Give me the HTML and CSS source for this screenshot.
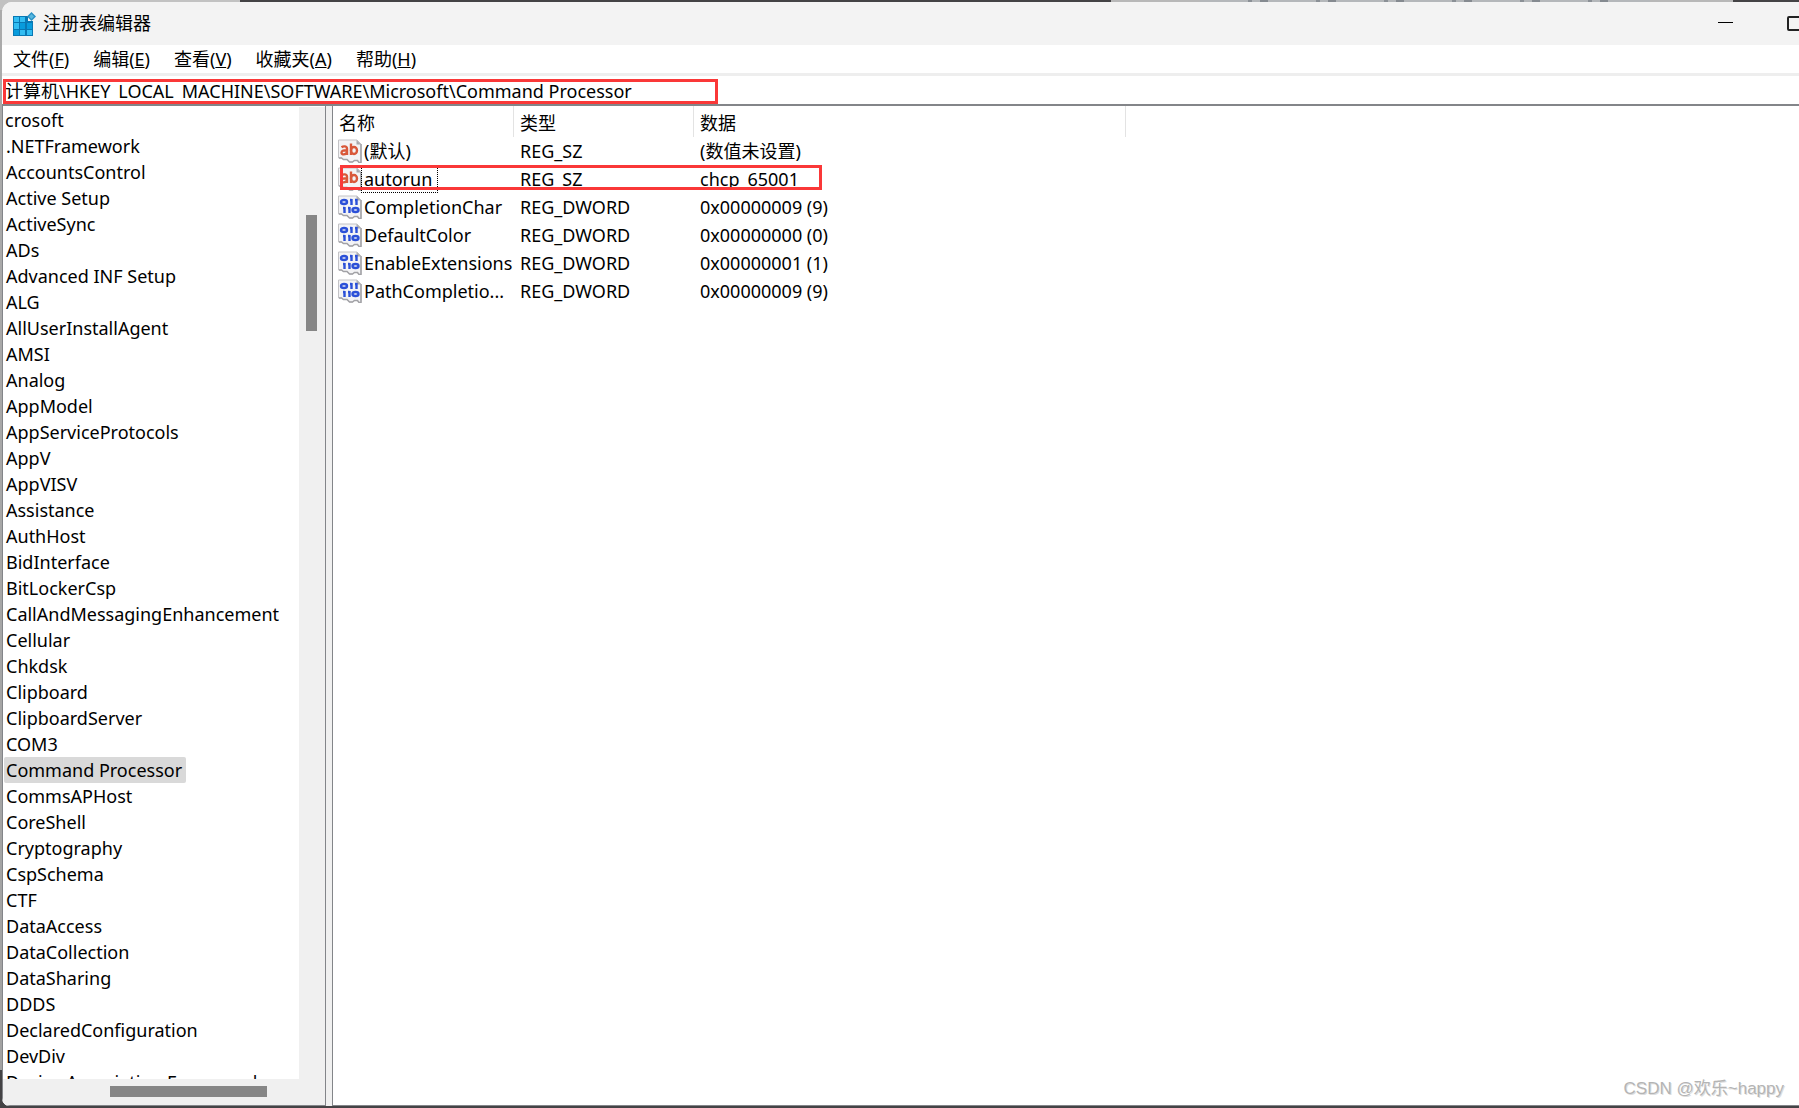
FILE: index.html
```html
<!DOCTYPE html>
<html lang="zh-CN">
<head>
<meta charset="utf-8">
<title>注册表编辑器</title>
<link rel="stylesheet" href="styles.css">
</head>
<body>
<svg class="defs" aria-hidden="true">
  <symbol id="page" viewBox="0 0 24 24">
    <path d="M.5 1H19l4 4v18.500h-2l-1.500-2h-3l-2 1.500h-3L9 20.500H5.500L3.500 19H.5z" fill="#f3f3f5" stroke="#c3c3c6"/>
    <path d="M23 5v18.500h-2l-1.500-2h-3l-2 1.500h-3L9 20.500H5.500L3.500 19H1" fill="none" stroke="#a2a2a6" stroke-width="1.500"/>
    <path d="M18.500 1v4.500H23z" fill="#a9a9ad"/>
  </symbol>
  <symbol id="string" viewBox="0 0 24 24">
    <use href="#page"/>
    <g fill="none" stroke="#d9583a" stroke-width="2.400">
      <path d="M3.500 8.200c2-1.400 5.500-1.200 5.500 1.500V16M9 11.300c-3-.1-5.500.4-5.500 2.400 0 2.300 4.300 2.200 5.500-.5"/>
      <path d="M13 4.500V16"/><ellipse cx="16" cy="11.500" rx="3" ry="3.500"/>
    </g>
  </symbol>
  <symbol id="binary" viewBox="0 0 24 24">
    <use href="#page"/>
    <g fill="none" stroke="#2b50d8" stroke-width="2.400">
      <ellipse cx="6" cy="7" rx="3" ry="2"/><path d="M13.500 4V10M18.500 4V10M12 5h1.500M17 5h1.500"/>
      <path d="M6.500 12v6M11.500 12v6M5 13h1.500M10 13h1.500"/><ellipse cx="17.500" cy="15" rx="3" ry="2"/>
    </g>
  </symbol>
</svg>
<div class="window">
  <header class="titlebar">
    <svg class="app-icon" viewBox="0 0 24 24" aria-hidden="true">
      <path d="M1 4h15v5h5v15H1z" fill="#0878b4"/>
      <g fill="#32bdf2"><path d="M2 5h5v5H2zM8 5h5v5H8zM2 11h5v6H2zM8 18h5v5H8zM15 18h5v5h-5z"/></g>
      <g fill="#079bdc"><path d="M8 11h5v6H8zM15 11h5v6h-5zM2 18h5v5H2z"/></g>
      <path d="M19.500 0 24 4.500 19.500 9 15 4.500z" fill="#2a90c4"/><path d="M19.500 2 22 4.500 19.500 7 17 4.500z" fill="#58b8e0"/>
    </svg>
    <h1 class="title">注册表编辑器</h1>
    <div class="controls">
      <button class="control" aria-label="最小化"><span class="minimize"></span></button>
      <button class="control" aria-label="最大化"><span class="maximize"></span></button>
    </div>
  </header>
  <nav class="menu">
    <button>文件(<u>F</u>)</button>
    <button>编辑(<u>E</u>)</button>
    <button>查看(<u>V</u>)</button>
    <button>收藏夹(<u>A</u>)</button>
    <button>帮助(<u>H</u>)</button>
  </nav>
  <div class="address">
    <input type="text" aria-label="地址" value="计算机\HKEY_LOCAL_MACHINE\SOFTWARE\Microsoft\Command Processor">
    <span class="mark mark-address"></span>
  </div>
  <main class="panes">
    <section class="tree-pane">
      <ul class="tree" role="tree">
        <li class="parent" role="treeitem">crosoft</li>
        <li role="treeitem">.NETFramework</li>
        <li role="treeitem">AccountsControl</li>
        <li role="treeitem">Active Setup</li>
        <li role="treeitem">ActiveSync</li>
        <li role="treeitem">ADs</li>
        <li role="treeitem">Advanced INF Setup</li>
        <li role="treeitem">ALG</li>
        <li role="treeitem">AllUserInstallAgent</li>
        <li role="treeitem">AMSI</li>
        <li role="treeitem">Analog</li>
        <li role="treeitem">AppModel</li>
        <li role="treeitem">AppServiceProtocols</li>
        <li role="treeitem">AppV</li>
        <li role="treeitem">AppVISV</li>
        <li role="treeitem">Assistance</li>
        <li role="treeitem">AuthHost</li>
        <li role="treeitem">BidInterface</li>
        <li role="treeitem">BitLockerCsp</li>
        <li role="treeitem">CallAndMessagingEnhancement</li>
        <li role="treeitem">Cellular</li>
        <li role="treeitem">Chkdsk</li>
        <li role="treeitem">Clipboard</li>
        <li role="treeitem">ClipboardServer</li>
        <li role="treeitem">COM3</li>
        <li class="selected" role="treeitem" aria-selected="true">Command Processor</li>
        <li role="treeitem">CommsAPHost</li>
        <li role="treeitem">CoreShell</li>
        <li role="treeitem">Cryptography</li>
        <li role="treeitem">CspSchema</li>
        <li role="treeitem">CTF</li>
        <li role="treeitem">DataAccess</li>
        <li role="treeitem">DataCollection</li>
        <li role="treeitem">DataSharing</li>
        <li role="treeitem">DDDS</li>
        <li role="treeitem">DeclaredConfiguration</li>
        <li role="treeitem">DevDiv</li>
        <li role="treeitem">Device Association Framework</li>
      </ul>
      <div class="scroll-y"><div class="thumb-y"></div></div>
      <div class="scroll-x"><div class="thumb-x"></div></div>
    </section>
    <section class="values-pane">
      <table class="values">
        <colgroup><col class="col-name"><col class="col-type"><col class="col-data"></colgroup>
        <thead><tr><th>名称</th><th>类型</th><th>数据</th></tr></thead>
        <tbody>
          <tr><td><div class="name"><svg><use href="#string"/></svg><span>(默认)</span></div></td><td>REG_SZ</td><td>(数值未设置)</td></tr>
          <tr><td><div class="name"><svg><use href="#string"/></svg><span class="focused">autorun</span></div></td><td>REG_SZ</td><td>chcp_65001</td></tr>
          <tr><td><div class="name"><svg><use href="#binary"/></svg><span>CompletionChar</span></div></td><td>REG_DWORD</td><td>0x00000009 (9)</td></tr>
          <tr><td><div class="name"><svg><use href="#binary"/></svg><span>DefaultColor</span></div></td><td>REG_DWORD</td><td>0x00000000 (0)</td></tr>
          <tr><td><div class="name"><svg><use href="#binary"/></svg><span>EnableExtensions</span></div></td><td>REG_DWORD</td><td>0x00000001 (1)</td></tr>
          <tr><td><div class="name"><svg><use href="#binary"/></svg><span>PathCompletio...</span></div></td><td>REG_DWORD</td><td>0x00000009 (9)</td></tr>
        </tbody>
      </table>
      <span class="mark mark-value"></span>
      <p class="watermark">CSDN @欢乐~happy</p>
    </section>
  </main>
</div>
</body>
</html>
```
FILE: styles.css
```css
* { box-sizing: border-box; }

body {
  margin: 0;
  height: 100vh;
  padding: 2px 0 2px 2px;
  overflow: hidden;
  color: #000;
  font: 18px/26px "Noto Sans", "Noto Sans CJK SC", sans-serif;
  background:
    linear-gradient(#c2c2c2, #c2c2c2) 0 0 / 240px 10px no-repeat,
    repeating-linear-gradient(90deg, #b4b7ba 0 48px, #8b9096 48px 52px, #b4b7ba 52px 60px, #858a90 60px 68px) 1200px 0 / 450px 2px no-repeat,
    linear-gradient(#b8b8b8, #b8b8b8) 1111px 0 / 622px 2px no-repeat,
    linear-gradient(#ababab, #a2a2a2) 0 0 / 2px 1070px no-repeat,
    #444345;
}

button, input { font: inherit; color: inherit; }
button { border: 0; padding: 0; background: none; }
.defs { position: absolute; width: 0; height: 0; }

.window {
  display: flex;
  flex-direction: column;
  height: 100%;
  overflow: hidden;
  border-radius: 10px 0 0 8px;
  background: #fff;
}

.titlebar {
  display: flex;
  flex: none;
  align-items: center;
  height: 43px;
  padding-left: 10px;
  background: #f3f3f3;
}
.app-icon { width: 24px; height: 24px; margin-right: 7px; }
.title { margin: 0; padding-bottom: 2px; font-size: 18px; font-weight: 400; }
.controls { display: flex; margin-left: auto; height: 100%; overflow: hidden; }
.control { display: flex; align-items: center; width: 66px; }
.control:last-child { width: 15px; }
.minimize { width: 15px; height: 1px; margin-bottom: 3px; background: #000; }
.maximize {
  flex: none;
  width: 15px;
  height: 15px;
  margin-left: 3px;
  border: 2px solid #222;
  border-radius: 2px;
}

.menu {
  display: flex;
  flex: none;
  gap: 24px;
  height: 31px;
  padding: 0 11px;
  border-bottom: 3px solid #eee;
}

.address { position: relative; flex: none; height: 30px; border-bottom: 2px solid #838589; }
.address input {
  display: block;
  width: 100%;
  height: 28px;
  padding: 0 4px 0 3px;
  border: 0;
  outline: 0;
  clip-path: inset(0 0 5px);
}

.mark { position: absolute; border: 3px solid #fa3838; pointer-events: none; }
.mark-address { left: 1px; top: 3px; width: 715px; height: 25px; }
.mark-value { left: 7px; top: 59px; width: 482px; height: 25px; }

.panes { display: flex; flex: 1; min-height: 0; background: #f0f0f0; }

.tree-pane {
  display: grid;
  flex: none;
  grid-template: minmax(0, 1fr) 26px / minmax(0, 1fr) 26px;
  width: 324px;
  padding-top: 1px;
  border-left: 1px solid #838589;
  border-right: 1px solid #838589;
  border-bottom: 1px solid #838589;
  background: #fff;
}
.tree { margin: 0; padding: 0 0 0 1px; overflow: hidden; list-style: none; white-space: nowrap; }
.tree li { width: max-content; height: 26px; padding: 0 4px 0 2px; border-radius: 2px; }
.tree .parent { padding-left: 1px; }
.tree .selected { background: #d9d9d9; }
.scroll-y { background: #f0f0f0; padding: 108px 7px 0; }
.thumb-y { width: 11px; height: 116px; background: #868686; }
.scroll-x { grid-column: 1 / -1; background: #f0f0f0; padding: 7px 0 0 107px; }
.thumb-x { width: 157px; height: 11px; background: #868686; }

.values-pane {
  position: relative;
  flex: 1;
  min-width: 0;
  margin-left: 6px;
  border-left: 1px solid #838589;
  border-bottom: 1px solid #838589;
  background: #fff;
}
.values { width: 793px; table-layout: fixed; border-collapse: separate; border-spacing: 0; }
.col-name { width: 181px; }
.col-type { width: 180px; }
.col-data { width: 432px; }
.values th {
  height: 31px;
  padding: 2px 6px 0;
  border-right: 1px solid #e3e3e3;
  font-weight: 400;
  text-align: left;
}
.values td { height: 28px; padding: 0 0 0 6px; white-space: nowrap; }
.values td:first-child { padding-left: 5px; }
.name { display: flex; align-items: center; height: 28px; }
.name svg { flex: none; width: 24px; height: 24px; }
.name span { padding: 0 2px; }
.name .focused { padding-right: 5px; outline: 1px dotted #000; }

.watermark {
  position: absolute;
  right: 15px;
  bottom: 3px;
  margin: 0;
  color: #b4b4b4;
  font-family: "Liberation Sans", "Noto Sans CJK SC", sans-serif;
  font-size: 17px;
  text-shadow: -1px -1px #fff, 1px 1px #ddd;
}
```
